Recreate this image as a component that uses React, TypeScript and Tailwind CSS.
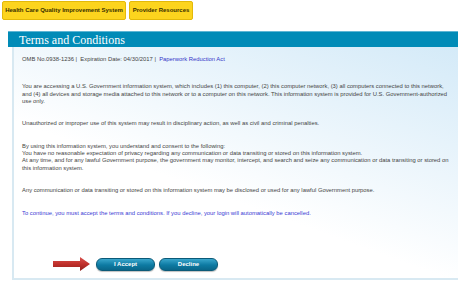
import React from 'react';

const body = "font-['Liberation_Sans',Arial,sans-serif]";

function RedArrow() {
  return (
    <svg width="40" height="16" viewBox="0 0 40 16" className="block">
      <defs>
        <linearGradient id="arrowFill" x1="0" y1="0" x2="0" y2="1">
          <stop offset="0" stopColor="#d9534f" />
          <stop offset="0.5" stopColor="#c0302b" />
          <stop offset="1" stopColor="#8f1f1b" />
        </linearGradient>
      </defs>
      <path d="M1 5 H28 V1 L38 8 L28 15 V11 H1 Z" fill="url(#arrowFill)" />
    </svg>
  );
}

export default function App() {
  const paragraphs = [
    [
      'You are accessing a U.S. Government information system, which includes (1) this computer, (2) this computer network, (3) all computers connected to this network, and (4) all devices and storage media attached to this network or to a computer on this network. This information system is provided for U.S. Government-authorized use only.',
    ],
    ['Unauthorized or improper use of this system may result in disciplinary action, as well as civil and criminal penalties.'],
    [
      'By using this information system, you understand and consent to the following:',
      'You have no reasonable expectation of privacy regarding any communication or data transiting or stored on this information system.',
      'At any time, and for any lawful Government purpose, the government may monitor, intercept, and search and seize any communication or data transiting or stored on this information system.',
    ],
    ['Any communication or data transiting or stored on this information system may be disclosed or used for any lawful Government purpose.'],
  ];

  return (
    <div className={`w-[458px] h-[283px] bg-white overflow-hidden ${body}`}>
      {/* Top tabs */}
      <div className="flex gap-[3px] pl-[2px] pt-[1px]">
        <button className="h-[19px] w-[124px] rounded-[2px] border border-[#e3b90a] bg-[#fcd41e] text-[6px] font-bold text-[#3a3000]">
          Health Care Quality Improvement System
        </button>
        <button className="h-[19px] w-[64px] rounded-[2px] border border-[#e3b90a] bg-[#fcd41e] text-[6px] font-bold text-[#3a3000]">
          Provider Resources
        </button>
      </div>

      {/* Header bar */}
      <div className="mt-[11px] ml-[8px] h-[16px] bg-[#018bb7] border-t border-[#5fb6d4] flex items-center pl-[11px]">
        <h1 className="font-['Liberation_Serif','Times_New_Roman',serif] text-[12px] leading-none text-white">
          Terms and Conditions
        </h1>
      </div>

      {/* Content panel */}
      <div className="ml-[12px] h-[233px] border-l-2 border-b-2 border-[#d8e9f2] bg-[linear-gradient(200deg,#d4eaf8_0%,#ffffff_60%)] pl-[8px] pr-[6px] pt-[9px] text-[5.85px] leading-[7.35px] text-[#444]">
        <p>
          OMB No.0938-1236 |&nbsp; Expiration Date: 04/30/2017 |&nbsp;{' '}
          <span className="text-[#3434c8]">Paperwork Reduction Act</span>
        </p>
        {paragraphs.map((lines, i) => (
          <div key={i} className={i === 0 ? 'mt-[20px]' : 'mt-[15px]'}>
            {lines.map((l, j) => (
              <p key={j}>{l}</p>
            ))}
          </div>
        ))}
        <p className="mt-[15.5px] text-[#3a3ad4]">
          To continue, you must accept the terms and conditions. If you decline, your login will automatically be cancelled.
        </p>

        <div className="mt-[39px] flex items-center">
          <div className="ml-[30px] mr-[4px]">
            <RedArrow />
          </div>
          <button className="h-[13px] w-[59px] rounded-[6px] border border-[#0b5a78] bg-[linear-gradient(#3aa6cc,#0d7aa2_55%,#0a6689)] text-[6px] font-bold text-white shadow-[0_1px_1px_rgba(0,0,0,0.25)]">
            I Accept
          </button>
          <button className="ml-[4px] h-[13px] w-[59px] rounded-[6px] border border-[#0b5a78] bg-[linear-gradient(#3aa6cc,#0d7aa2_55%,#0a6689)] text-[6px] font-bold text-white shadow-[0_1px_1px_rgba(0,0,0,0.25)]">
            Decline
          </button>
        </div>
      </div>
    </div>
  );
}
